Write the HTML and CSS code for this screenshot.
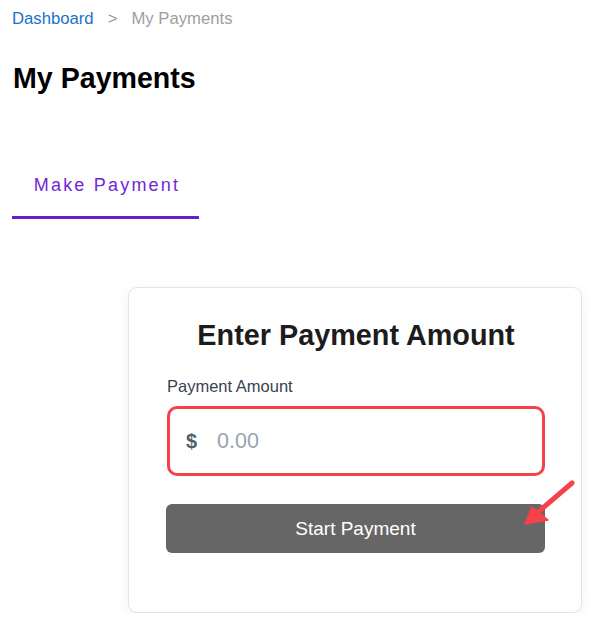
FILE: index.html
```html
<!DOCTYPE html>
<html lang="en">
<head>
<meta charset="utf-8">
<title>My Payments</title>
<link rel="stylesheet" href="styles.css">
</head>
<body>
<div class="page">
  <nav class="breadcrumb">
    <a class="crumb-link" href="#">Dashboard</a>
    <span class="crumb-sep">&gt;</span>
    <span class="crumb-current">My Payments</span>
  </nav>
  <h1 class="page-title">My Payments</h1>
  <div class="tabs">
    <button class="tab tab-active">Make Payment</button>
  </div>
  <div class="card-row">
    <div class="card">
      <h2 class="card-title">Enter Payment Amount</h2>
      <label class="field-label" for="amount">Payment Amount</label>
      <div class="amount-input">
        <span class="currency">$</span>
        <input id="amount" class="amount-field" type="text" placeholder="0.00">
      </div>
      <button class="start-btn">Start Payment</button>
    </div>
  </div>
  <svg class="arrow" width="60" height="50" viewBox="0 0 60 50">
    <line x1="49" y1="5" x2="14" y2="35" stroke="#f5424a" stroke-width="5" stroke-linecap="round"/>
    <polygon points="2,46 9,29 25,42" fill="#f5424a" stroke="#f5424a" stroke-width="1.5" stroke-linejoin="round"/>
  </svg>
</div>
</body>
</html>
```
FILE: styles.css
```css
html, body {
  margin: 0;
  padding: 0;
  background: #ffffff;
}
body {
  font-family: "Liberation Sans", Arial, sans-serif;
  color: #000;
}
.page {
  position: relative;
  padding: 9px 12px 0 12px;
}
.breadcrumb {
  display: flex;
  align-items: baseline;
  font-size: 16.7px;
  line-height: 19px;
}
.crumb-link {
  color: #1a70c8;
  text-decoration: none;
}
.crumb-sep {
  color: #9a9a9a;
  padding: 0 14px 0 14px;
}
.crumb-current {
  color: #9e9e9e;
}
.page-title {
  margin: 34px 0 0 1px;
  font-size: 28.6px;
  line-height: 33px;
  font-weight: 700;
  color: #000;
}
.tabs {
  display: flex;
  margin-top: 60px;
}
.tab {
  border: none;
  background: none;
  font-family: "Liberation Sans", Arial, sans-serif;
  font-size: 18px;
  line-height: 21px;
  letter-spacing: 2.2px;
  padding: 20px 16px 20px 19px;
  width: 187px;
  color: #7127d6;
  border-bottom: 3px solid #6a1bcf;
  cursor: pointer;
}
.card-row {
  display: flex;
  justify-content: flex-end;
  margin-top: 68px;
  padding-right: 4px;
}
.card {
  width: 454px;
  box-sizing: border-box;
  border: 1px solid #e3e4e8;
  border-radius: 9px;
  background: #fff;
  box-shadow: 0 3px 12px rgba(0, 0, 0, 0.06);
  padding: 31px 36px 59px 38px;
  display: flex;
  flex-direction: column;
}
.card-title {
  margin: 0;
  text-align: center;
  font-size: 28.8px;
  line-height: 33px;
  font-weight: 700;
  color: #1c1c1c;
}
.field-label {
  margin-top: 25px;
  font-size: 16.5px;
  line-height: 19px;
  color: #3a4252;
}
.amount-input {
  margin-top: 10px;
  height: 70px;
  box-sizing: border-box;
  border: 3px solid #f2434a;
  border-radius: 10px;
  display: flex;
  align-items: center;
  padding: 0 16px;
  gap: 0;
}
.currency {
  font-weight: 700;
  font-size: 20px;
  color: #555d68;
  width: 31px;
}
.amount-field {
  border: none;
  outline: none;
  flex: 1;
  min-width: 0;
  font-family: "Liberation Sans", Arial, sans-serif;
  font-size: 21.5px;
  color: #333;
  padding: 0;
  background: transparent;
}
.amount-field::placeholder {
  color: #9ba2ad;
}
.start-btn {
  margin-top: 28px;
  margin-left: -1px;
  height: 49px;
  border: none;
  border-radius: 6px;
  background: #666666;
  color: #ffffff;
  font-family: "Liberation Sans", Arial, sans-serif;
  font-size: 19px;
  cursor: pointer;
}
.arrow {
  position: absolute;
  left: 523px;
  top: 478px;
}
```
